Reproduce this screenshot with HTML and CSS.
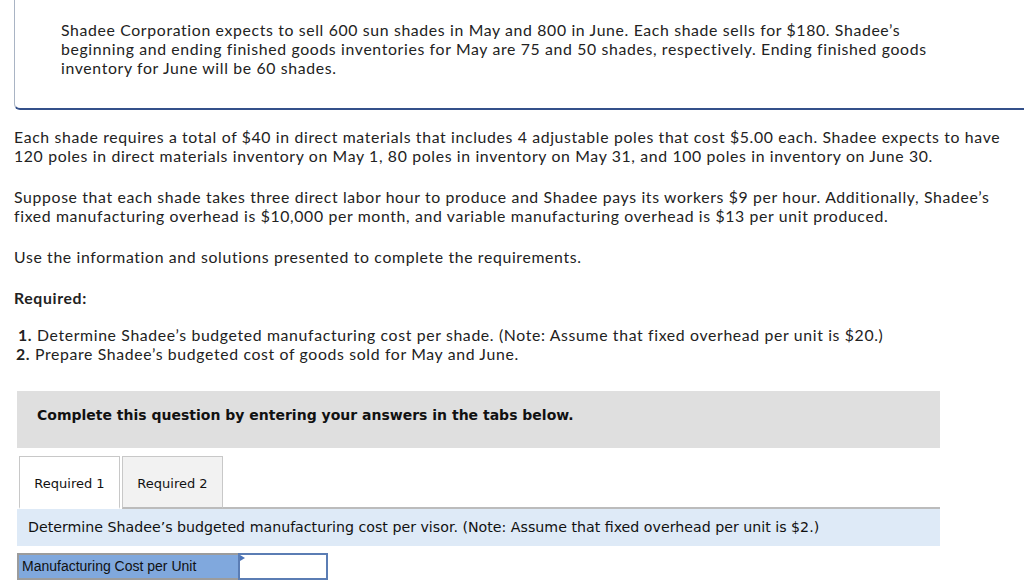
FILE: index.html
```html
<!DOCTYPE html>
<html>
<head>
<meta charset="utf-8">
<link rel="stylesheet" href="styles.css">
</head>
<body>
<div class="problem">
  <p>Shadee Corporation expects to sell 600 sun shades in May and 800 in June. Each shade sells for $180. Shadee’s<br>beginning and ending finished goods inventories for May are 75 and 50 shades, respectively. Ending finished goods<br>inventory for June will be 60 shades.</p>
</div>
<div class="body">
  <p class="para">Each shade requires a total of $40 in direct materials that includes 4 adjustable poles that cost $5.00 each. Shadee expects to have<br>120 poles in direct materials inventory on May 1, 80 poles in inventory on May 31, and 100 poles in inventory on June 30.</p>
  <p class="para">Suppose that each shade takes three direct labor hour to produce and Shadee pays its workers $9 per hour. Additionally, Shadee’s<br>fixed manufacturing overhead is $10,000 per month, and variable manufacturing overhead is $13 per unit produced.</p>
  <p class="para">Use the information and solutions presented to complete the requirements.</p>
  <p class="para req-title">Required:</p>
  <ol class="req-list">
    <li class="one"><b>1.</b> Determine Shadee’s budgeted manufacturing cost per shade. (Note: Assume that fixed overhead per unit is $20.)</li>
    <li class="two"><b>2.</b> Prepare Shadee’s budgeted cost of goods sold for May and June.</li>
  </ol>
</div>
<div class="panel">
  <div class="instructions">Complete this question by entering your answers in the tabs below.</div>
  <div class="tabs">
    <div class="tab active">Required 1</div>
    <div class="tab">Required 2</div>
    <div class="tab-fill"></div>
  </div>
  <div class="prompt">Determine Shadee’s budgeted manufacturing cost per visor. (Note: Assume that fixed overhead per unit is $2.)</div>
  <div class="answer-row">
    <div class="label-cell">Manufacturing Cost per Unit</div>
    <div class="input-cell"><span class="marker"></span></div>
  </div>
</div>
</body>
</html>
```

FILE: styles.css
```css
html, body {
  margin: 0;
  padding: 0;
  background: #fff;
}
body {
  font-family: "Lato", "Open Sans", sans-serif;
  font-size: 15.8px;
  letter-spacing: 0.65px;
  line-height: 19px;
  color: #222;
  overflow: hidden;
}
p { margin: 0; }

.problem {
  margin-left: 14px;
  border-left: 1px solid #a9b4c4;
  border-bottom: 2px solid #34508a;
  border-bottom-left-radius: 6px;
  padding: 20px 0 31px 46px;
  white-space: nowrap;
}

.body {
  padding: 0 0 0 14px;
  margin-top: 17px;
  white-space: nowrap;
}
.para {
  margin-bottom: 22px;
}
.req-title {
  font-weight: bold;
  margin-bottom: 18px;
}
.req-list {
  list-style: none;
  margin: 0;
  padding: 0;
}
.req-list li.one { padding-left: 4px; }
.req-list li.two { padding-left: 2px; }

.panel {
  margin: 28px 84px 0 17px;
  letter-spacing: 0;
}
.instructions {
  background: #dfdfdf;
  font-family: "DejaVu Sans", Verdana, sans-serif;
  font-weight: bold;
  font-size: 14px;
  color: #111;
  height: 57px;
  padding-left: 20px;
  display: flex;
  align-items: center;
  box-sizing: border-box;
  padding-bottom: 8px;
}
.tabs {
  display: flex;
  margin-top: 8px;
  height: 53px;
  align-items: stretch;
}
.tab {
  font-family: "DejaVu Sans", Verdana, sans-serif;
  font-size: 13px;
  color: #111;
  border: 1px solid #c8c8c8;
  border-bottom: 2px solid #bcbcbc;
  background: #f2f2f2;
  display: flex;
  align-items: center;
  justify-content: center;
  margin-left: 2px;
  box-sizing: border-box;
  width: 101px;
  padding-top: 3px;
}
.tab.active {
  background: #fff;
  border-bottom: 2px solid #fff;
}
.tab-fill {
  flex: 1;
  border-bottom: 2px solid #bcbcbc;
}
.prompt {
  background: #deeaf7;
  font-family: "DejaVu Sans", Verdana, sans-serif;
  font-size: 14.2px;
  color: #111;
  height: 37px;
  padding-left: 11px;
  display: flex;
  align-items: center;
}
.answer-row {
  display: flex;
  margin-top: 7px;
  height: 27px;
}
.label-cell {
  width: 221px;
  box-sizing: border-box;
  background: #80a8dd;
  border: 2px solid #9c9c9c;
  border-right: none;
  font-family: "Liberation Sans", Arial, sans-serif;
  font-size: 14px;
  color: #111;
  padding-left: 3px;
  display: flex;
  align-items: center;
}
.input-cell {
  position: relative;
  width: 90px;
  box-sizing: border-box;
  background: #fff;
  border: 2px solid #5b7db4;
}
.marker {
  position: absolute;
  left: 0;
  top: 0;
  width: 0;
  height: 0;
  border-top: 3px solid transparent;
  border-bottom: 3px solid transparent;
  border-left: 5px solid #4a72b8;
}
```
